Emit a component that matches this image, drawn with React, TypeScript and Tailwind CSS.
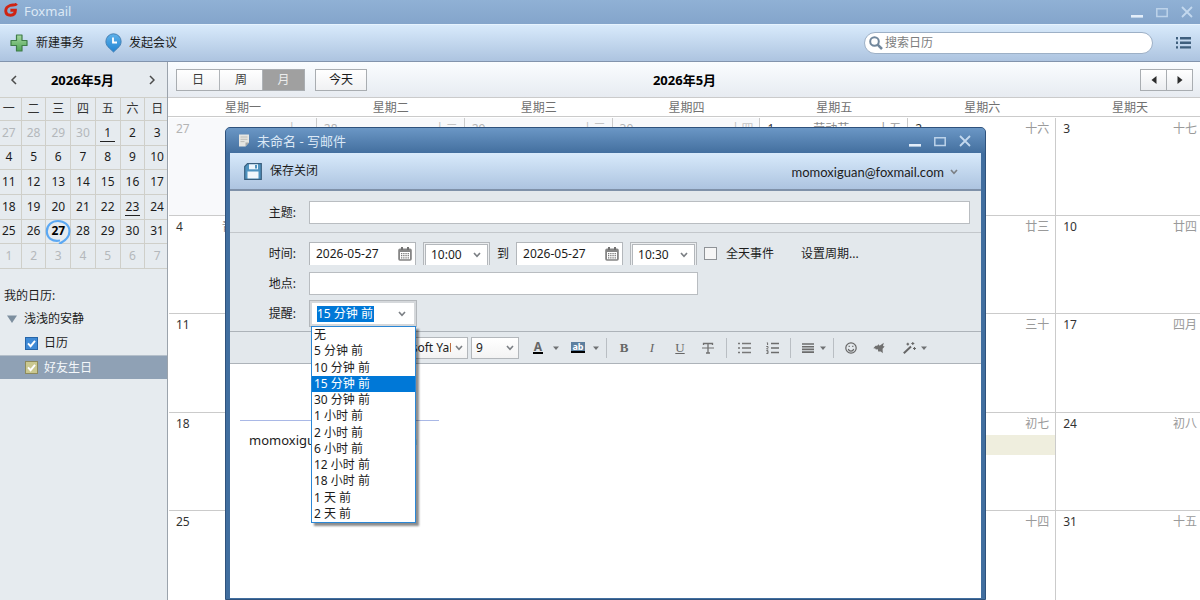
import type { ReactNode } from 'react';

interface Day {
    day: number;
    lunar: string;
    muted?: boolean;
    holiday?: string;
    event?: boolean;
}

const WEEK = ['一', '二', '三', '四', '五', '六', '日'];
const LONG_WEEK = ['星期一', '星期二', '星期三', '星期四', '星期五', '星期六', '星期天'];

const LUNAR = [
    '十一', '十二', '十三', '十四', '十五', '十六', '十七',
    '十八', '十九', '二十', '廿一', '廿二', '廿三', '廿四',
    '廿五', '廿六', '廿七', '廿八', '廿九', '三十', '四月',
    '初二', '初三', '初四', '初五', '初六', '初七', '初八',
    '初九', '初十', '十一', '十二', '十三', '十四', '十五',
];

const HOLIDAYS: Record<number, string> = { 1: '劳动节', 4: '青年节' };

// The grid opens on Monday 27 April, four days before the month does
const DAYS: Day[] = LUNAR.map((lunar, i) => {
    const day = i < 4 ? 27 + i : i - 3;
    return {
        day,
        lunar,
        muted: i < 4,
        holiday: i < 4 ? undefined : HOLIDAYS[day],
        event: i >= 4 && day === 23,
    };
});

const MINI_DAYS: Day[] = [...DAYS, ...[1, 2, 3, 4, 5, 6, 7].map((day) => ({ day, lunar: '', muted: true }))];

const REMINDERS = [
    '无', '5 分钟 前', '10 分钟 前', '15 分钟 前', '30 分钟 前', '1 小时 前',
    '2 小时 前', '6 小时 前', '12 小时 前', '18 小时 前', '1 天 前', '2 天 前',
];

function Chevron({ className }: { className?: string }) {
    return (
        <svg viewBox="0 0 8 6" className={`pointer-events-none h-1.5 w-2 shrink-0 ${className ?? ''}`} fill="none" stroke="#7b7f84" strokeWidth="1.6">
            <path d="M1 1l3 3.4L7 1" />
        </svg>
    );
}

function Caret() {
    return (
        <svg viewBox="0 0 8 8" className="h-2 w-2 shrink-0" fill="#6f7173">
            <path d="M1 2.4h6L4 6z" />
        </svg>
    );
}

function WindowButtons() {
    return (
        <div className="flex items-center gap-[13px]">
            <button aria-label="最小化" className="h-3 w-3">
                <svg viewBox="0 0 12 12" className="h-3 w-3"><path d="M0 9h12v2.6H0z" fill="#e3eefa" /></svg>
            </button>
            <button aria-label="最大化" className="h-3 w-3">
                <svg viewBox="0 0 12 12" className="h-3 w-3" fill="none" stroke="#bdd3ea" strokeWidth="1.5"><path d="M.8 2.8h10.4v7.6H.8z" /></svg>
            </button>
            <button aria-label="关闭" className="h-3 w-3">
                <svg viewBox="0 0 12 12" className="h-3 w-3" fill="none" stroke="#c3d8ee" strokeWidth="1.8"><path d="M1 1l10 10M11 1L1 11" /></svg>
            </button>
        </div>
    );
}

function TitleBar() {
    return (
        <header className="flex h-6 shrink-0 items-center justify-between bg-linear-to-b from-[#90b1d5] to-[#84a5cb] pr-[7px] pl-1">
            <div className="flex items-center gap-1.5">
                <svg viewBox="0 0 14 14" className="-mt-1 h-3.5 w-3.5" fill="none" stroke="#cf2413" strokeWidth="2.9">
                    <path d="M12.8.8C11 2.800 8.600 1.500 6 2.500C2.800 3.700 1.500 6 1.800 8.600C2.100 11.400 4 12.300 6.600 12.200C9.800 12.100 11.400 10.600 11.400 7.200H6.400" />
                </svg>
                <span className="-mt-0.5 text-[13px] leading-5 text-[#dce8f5]">Foxmail</span>
            </div>
            <WindowButtons />
        </header>
    );
}

function Toolbar() {
    return (
        <div className="flex h-[38px] shrink-0 items-center border-t border-b border-t-[#e6f3fe] border-b-[#8294ad] bg-linear-to-b from-[#d8eafb] to-[#adc4e0] pr-[9px] pl-2.5">
            <button className="flex items-center gap-2">
                <svg viewBox="0 0 18 18" className="h-[18px] w-[18px]">
                    <defs>
                        <linearGradient id="plus" x1="0" y1="0" x2="0" y2="1">
                            <stop offset="0" stopColor="#a5d8a0" />
                            <stop offset="1" stopColor="#4fa455" />
                        </linearGradient>
                    </defs>
                    <path d="M6.500 1h5.500v5.500h5v5h-5V17H6.500v-5.500H1v-5h5.500z" fill="url(#plus)" stroke="#3f7c48" strokeWidth="1.200" strokeLinejoin="round" />
                </svg>
                新建事务
            </button>
            <button className="ml-[21px] flex items-center gap-[7px]">
                <svg viewBox="0 0 17 20" className="h-5 w-[17px]">
                    <defs>
                        <linearGradient id="pin" x1="0" y1="0" x2="0" y2="1">
                            <stop offset="0" stopColor="#5fb2ea" />
                            <stop offset="1" stopColor="#1f83d2" />
                        </linearGradient>
                    </defs>
                    <path d="M8.500.8a7.600 7.600 0 0 1 7.600 7.600c0 3-1.500 5-3.300 6.500L8.500 19l-4.300-4.100C2.400 13.400.9 11.400.9 8.400A7.600 7.600 0 0 1 8.500.8z" fill="url(#pin)" stroke="#4680b3" />
                    <path d="M8 4.500v5h4" fill="none" stroke="#fff" strokeWidth="1.800" />
                </svg>
                发起会议
            </button>
            <label className="ml-auto flex h-[22px] w-[289px] items-center gap-0.5 rounded-full border border-[#9db0c6] bg-white pl-1">
                <svg viewBox="0 0 14 14" className="h-3.5 w-3.5" fill="none" stroke="#71879c" strokeWidth="2">
                    <circle cx="5.500" cy="5.500" r="4.300" />
                    <path d="M8.600 8.600l4.400 4.400" strokeWidth="2.600" />
                </svg>
                <input type="text" aria-label="搜索日历" placeholder="搜索日历" className="min-w-0 flex-1 bg-transparent outline-none placeholder:text-[#7d7d7d]" />
            </label>
            <button aria-label="菜单" className="ml-[23px]">
                <svg viewBox="0 0 15 12" className="h-3 w-[15px]" fill="#3f5f7d">
                    <path d="M0 0h2v2.400H0zM4 0h11v2.400H4zM0 4.600h2V7H0zM4 4.600h11V7H4zM0 9.200h2v2.400H0zM4 9.200h11v2.400H4z" />
                </svg>
            </button>
        </div>
    );
}

function CalendarCheck({ label, boxClass }: { label: string; boxClass: string }) {
    return (
        <label className="flex h-full items-center">
            <span className="relative flex">
                <input type="checkbox" defaultChecked className={`h-[13px] w-[13px] appearance-none border ${boxClass}`} />
                <svg viewBox="0 0 13 13" className="pointer-events-none absolute inset-0" fill="none" stroke="#fff" strokeWidth="1.900">
                    <path d="M3 6.300l2.600 2.900L10 3.900" />
                </svg>
            </span>
            <span className="ml-1.5">{label}</span>
        </label>
    );
}

function Sidebar() {
    return (
        <aside className="w-[168px] shrink-0 overflow-hidden border-r border-[#9ba3ac] bg-[#e6ebef]">
            <div className="flex h-[35px] items-center justify-between pr-3 pl-2.5">
                <button aria-label="上个月">
                    <svg viewBox="0 0 8 10" className="h-2.5 w-2" fill="none" stroke="#4b4b4b" strokeWidth="1.500"><path d="M6 1L2 5l4 4" /></svg>
                </button>
                <h2 className="text-[13px] font-bold text-black">2026年5月</h2>
                <button aria-label="下个月">
                    <svg viewBox="0 0 8 10" className="h-2.5 w-2" fill="none" stroke="#4b4b4b" strokeWidth="1.500"><path d="M3 1l4 4-4 4" /></svg>
                </button>
            </div>
            <div className="-mx-[3px]">
                <div className="grid h-6 grid-cols-7 border-y border-[#cfcfc9]">
                    {WEEK.map((name) => (
                        <span key={name} className="flex items-center justify-center border-r border-[#cfcfc9] text-[#333]">{name}</span>
                    ))}
                </div>
                <div className="grid h-[148px] grid-cols-7 grid-rows-6">
                    {MINI_DAYS.map(({ day, muted }, i) => {
                        const today = day === 27 && !muted;
                        const marked = !muted && (day === 1 || day === 23);
                        return (
                            <button
                                key={i}
                                className={`relative flex items-center justify-center border-r border-b border-[#cfcfc9] ${muted ? 'text-[#b4b8bb]' : 'text-[#1c1c1c]'} ${today ? 'font-bold text-black' : ''}`}
                            >
                                <span className={`w-[15px] border-y border-t-transparent text-center leading-4 ${marked ? 'border-b-[#222]' : 'border-b-transparent'}`}>{day}</span>
                                {today && (
                                    <svg viewBox="0 0 26 26" className="absolute h-[26px] w-[26px]" fill="none" stroke="#5ba8f3" strokeWidth="2.200">
                                        <path d="M15 22.500C7 24 1.800 19.500 1.800 13.200S7 3 13 3S24.500 7 24.500 13.200S19 23.500 14 26" />
                                    </svg>
                                )}
                            </button>
                        );
                    })}
                </div>
            </div>
            <div className="pt-3.5 leading-6 text-[#1c1c1c]">
                <h3 className="h-6 pt-px pl-1">我的日历:</h3>
                <div className="flex h-6 items-center gap-[7px] pl-[7px]">
                    <svg viewBox="0 0 10 8" className="h-2 w-2.5" fill="#7d8f9f"><path d="M0 .5h10L5 8z" /></svg>
                    <span>浅浅的安静</span>
                </div>
                <div className="h-6 pl-[25px]">
                    <CalendarCheck label="日历" boxClass="border-[#2665a8] bg-[#3f8ad6]" />
                </div>
                <div className="h-6 border-t border-[#b4bfca] bg-[#8fa1b5] pl-[25px] text-[#f4f7fa]">
                    <CalendarCheck label="好友生日" boxClass="border-[#8d8a5c] bg-[#cac890]" />
                </div>
            </div>
        </aside>
    );
}

function MonthView() {
    const tab = 'w-[43px] border-r border-[#b0b4b8]';
    return (
        <main className="flex min-w-0 flex-1 flex-col overflow-hidden bg-white">
            <div className="grid h-[35px] shrink-0 grid-cols-[1fr_auto_1fr] items-center bg-linear-to-b from-[#fafdff] to-[#e7ebf1] pr-[7px] pl-2">
                <div className="flex gap-2.5 text-[#3c3c3c]">
                    <div className="flex h-[22px] border border-[#a9adb1] bg-linear-to-b from-white to-[#f0f1f3]">
                        <button className={tab}>日</button>
                        <button className={tab}>周</button>
                        <button className="w-[41px] bg-[#a0a0a0] text-[#ececec]">月</button>
                    </div>
                    <button className="h-[22px] w-[52px] border border-[#a9adb1] bg-linear-to-b from-white to-[#f0f1f3] text-[#1c1c1c]">今天</button>
                </div>
                <h1 className="text-[13px] font-bold text-black">2026年5月</h1>
                <div className="flex h-[22px] justify-self-end border border-[#a9adb1] bg-linear-to-b from-white to-[#ebedf0]">
                    <button aria-label="上一页" className="flex w-[26px] items-center justify-center border-r border-[#a9adb1]">
                        <svg viewBox="0 0 6 8" className="h-2 w-1.5" fill="#2c2c2c"><path d="M5.500 0v8L.5 4z" /></svg>
                    </button>
                    <button aria-label="下一页" className="flex w-[25px] items-center justify-center">
                        <svg viewBox="0 0 6 8" className="h-2 w-1.5" fill="#2c2c2c"><path d="M.5 0v8l5-4z" /></svg>
                    </button>
                </div>
            </div>
            {/* The last column and row run a little past the window edge */}
            <div className="-mr-1 grid h-5 shrink-0 grid-cols-7 items-center border-y border-[#cbcbcb] pt-px pl-px text-center text-[#707070]">
                {LONG_WEEK.map((name) => (
                    <span key={name}>{name}</span>
                ))}
            </div>
            <div className="-mr-1 -mb-[9px] grid min-h-0 flex-1 grid-cols-7 grid-rows-5 pt-px pl-px">
                {DAYS.map(({ day, lunar, muted, holiday, event }, i) => (
                    <div key={i} className={`min-h-0 border-r border-b border-[#cbcbcb] ${muted ? 'bg-[#f8f9fb] text-[#b4b4b4]' : 'text-[#333]'}`}>
                        <div className="flex h-[22px] items-center pr-1.5 pl-[7px]">
                            <span>{day}</span>
                            <span className="mr-7 ml-auto text-[#8c8c8c]">{holiday}</span>
                            <span className={muted ? 'text-[#c4c4c4]' : 'text-[#9a9a9a]'}>{lunar}</span>
                        </div>
                        {event && <div className="h-5 bg-[#efeede]" />}
                    </div>
                ))}
            </div>
        </main>
    );
}

function DateField({ id, label }: { id: string; label: string }) {
    return (
        <div className="flex h-[23px] w-[107px] items-center justify-between border border-b-0 border-[#b3b7bb] bg-white pr-[3px] pl-1.5">
            <input id={id} type="text" aria-label={label} defaultValue="2026-05-27" className="w-[70px] outline-none" />
            <svg viewBox="0 0 14 14" className="h-3.5 w-3.5 shrink-0">
                <path d="M2 1.500h10a1.800 1.800 0 0 1 1.800 1.800V12a1.800 1.800 0 0 1-1.800 1.800H2A1.800 1.800 0 0 1 .2 12V3.300A1.800 1.800 0 0 1 2 1.500z" fill="#858585" />
                <path d="M3 0h2v3H3zM9 0h2v3H9z" fill="#707070" />
                <path d="M2 5h10v7.200H2z" fill="#fff" />
                <path d="M3 6.600h8M3 8.700h8M3 10.800h8" stroke="#777" strokeWidth="1.200" strokeDasharray="1.300 .9" />
            </svg>
        </div>
    );
}

function TimeField({ label, value }: { label: string; value: string }) {
    return (
        <div className="h-[23px] w-[67px] border border-b-0 border-[#b3b7bb] bg-[#eceef0] px-px pt-px">
            <div className="flex h-full items-center border border-b-0 border-[#b3b7bb] bg-white pr-1.5">
                <select aria-label={label} className="min-w-0 flex-1 appearance-none pl-[5px] outline-none">
                    <option>{value}</option>
                </select>
                <Chevron />
            </div>
        </div>
    );
}

function ReminderField() {
    return (
        <div className="relative h-[27px] w-[108px] border border-[#b3b7bb] bg-[#d5d8db] p-0.5">
            <div className="flex h-full items-center justify-between bg-white pr-2 pl-[5px]">
                <select id="reminder" defaultValue="15 分钟 前" className="h-4 w-[57px] appearance-none bg-[#0078d7] leading-4 text-white outline-none">
                    {REMINDERS.map((item) => (
                        <option key={item}>{item}</option>
                    ))}
                </select>
                <Chevron />
            </div>
            <ul role="listbox" aria-label="提醒" className="absolute top-[25px] left-px z-10 grid h-[197px] w-[105px] grid-rows-12 border border-[#2a87d6] bg-white shadow-[3px_3px_2px_rgba(0,0,0,0.45)]">
                {REMINDERS.map((item) => {
                    const selected = item === '15 分钟 前';
                    return (
                        <li key={item} role="option" aria-selected={selected} className={`pl-0.5 leading-4 ${selected ? 'bg-[#0078d7] text-white' : 'text-[#1c1c1c]'}`}>
                            {item}
                        </li>
                    );
                })}
            </ul>
        </div>
    );
}

function EditorButton({ label, children }: { label: string; children: ReactNode }) {
    return (
        <button aria-label={label} className="flex w-7 items-center justify-center font-['Liberation_Serif',serif] text-[13px] text-[#666]">
            {children}
        </button>
    );
}

function Divider() {
    return <span className="mr-[3px] ml-1 h-5 w-px bg-[#b9bec3]" />;
}

function EditorBar() {
    return (
        <div className="flex h-[33px] shrink-0 items-center border-y border-[#adb3b9] pl-[133px]">
            <div className="flex h-[22px] w-[105px] items-center border border-[#b3b7bb] bg-linear-to-b from-white to-[#f3f3f3] pr-1">
                <select aria-label="字体" className="min-w-0 flex-1 appearance-none pl-4 outline-none">
                    <option>Microsoft YaHei</option>
                </select>
                <Chevron className="ml-1" />
            </div>
            <div className="ml-[3px] flex h-[22px] w-12 items-center border border-[#b3b7bb] bg-linear-to-b from-white to-[#f3f3f3] pr-1">
                <select aria-label="字号" className="min-w-0 flex-1 appearance-none pl-1 outline-none">
                    <option>9</option>
                </select>
                <Chevron />
            </div>
            <button aria-label="文字颜色" className="ml-[7px] flex w-10 items-center gap-1.5 pl-1">
                <span className="flex w-4 justify-center">
                    <span className="w-2.5 border-b-2 border-black text-center text-[12px] leading-[11px] font-bold text-[#666]">A</span>
                </span>
                <Caret />
            </button>
            <button aria-label="背景颜色" className="flex w-9 items-center gap-1.5 pl-1">
                <span className="w-4 shrink-0 px-px">
                    <span className="block border-b-2 border-black bg-[#5c7f9f] text-center text-[9px] leading-[9px] font-bold text-white">ab</span>
                </span>
                <Caret />
            </button>
            <Divider />
            <EditorButton label="粗体"><b>B</b></EditorButton>
            <EditorButton label="斜体"><i>I</i></EditorButton>
            <EditorButton label="下划线"><u>U</u></EditorButton>
            <EditorButton label="删除线">
                <svg viewBox="0 0 12 12" className="h-3 w-3" fill="none" stroke="#707070">
                    <path d="M1.500 3V1.500h9V3M6 1.500V11M4 11h4" strokeWidth="1.300" />
                    <path d="M0 6h12" />
                </svg>
            </EditorButton>
            <Divider />
            <EditorButton label="项目符号">
                <svg viewBox="0 0 13 12" className="h-3 w-[13px]" fill="none" stroke="#777" strokeWidth="1.300">
                    <path d="M0 1.500h2M0 6h2M0 10.500h2M4 1.500h9M4 6h9M4 10.500h9" />
                </svg>
            </EditorButton>
            <EditorButton label="编号">
                <svg viewBox="0 0 13 12" className="h-3 w-[13px]" fill="none" stroke="#6c6c6c" strokeWidth="1.300">
                    <path d="M5 1.500h8M5 6h8M5 10.500h8" />
                    <path d="M.8.8h.8V3M.3 4.500h1.700v1L.6 7h1.700M.3 8.600h1.700v3H.3M.8 10h1" strokeWidth="1" />
                </svg>
            </EditorButton>
            <Divider />
            <button aria-label="对齐" className="flex items-center gap-[5px] pr-0.5 pl-2">
                <svg viewBox="0 0 12 10" className="h-2.5 w-3" stroke="#6c6c6c" strokeWidth="1.600">
                    <path d="M0 1h12M0 3.700h12M0 6.400h12M0 9.100h12" />
                </svg>
                <Caret />
            </button>
            <Divider />
            <EditorButton label="表情">
                <svg viewBox="0 0 12 12" className="h-3 w-3" fill="none" stroke="#666" strokeWidth="1.200">
                    <circle cx="6" cy="6" r="5.200" />
                    <path d="M3.300 7a2.800 2.800 0 0 0 5.400 0M4.200 3.800v1.200M7.800 3.800v1.200" />
                </svg>
            </EditorButton>
            <EditorButton label="信纸">
                <svg viewBox="0 0 12 12" className="h-3 w-3" fill="#6f6f6f">
                    <path d="M.3 6.200L2.600 3.800l1.600 0L5.600 2.200l1 1.600L10.800.8l-.8 3.200 1.600.4-2 2.400.2 4.400-2-1.600L5.200 9.400l-.4-2.200-2 .4-.4-1.200z" />
                </svg>
            </EditorButton>
            <button aria-label="特效" className="ml-2.5 flex items-center gap-1">
                <svg viewBox="0 0 13 12" className="h-3 w-[13px]" fill="none" stroke="#666">
                    <path d="M.8 11.200L8 4.600" strokeWidth="2" />
                    <path d="M9.800 0v3M8.300 1.500h3M11.500 5v3M10 6.500h3M4.800.8v2.600M3.500 2.100h2.600" strokeWidth="1.100" />
                </svg>
                <Caret />
            </button>
        </div>
    );
}

function Compose() {
    const label = 'w-[67px] shrink-0 pr-px text-right';
    return (
        <section
            aria-label="写邮件"
            className="absolute top-[127px] right-[214px] bottom-0 left-[225px] flex flex-col rounded-t-[5px] border border-[#2f527c] bg-[#416e9f] px-1 pb-px text-[#1c1c1c]"
        >
            <div className="-mx-1 flex h-[25px] shrink-0 items-center justify-between rounded-t-[4px] bg-linear-to-b from-[#6b97c5] to-[#436f9f] pr-3.5 pl-3">
                <div className="flex items-center gap-[7px]">
                    <svg viewBox="0 0 12 13" className="h-[13px] w-3">
                        <path d="M1 .5h10v8L7.500 12.500H1z" fill="#e6e6e2" />
                        <path d="M11 8.500H7.500v4z" fill="#a9aba9" />
                        <path d="M2.500 3h7M2.500 5.300h7M2.500 7.600h4" stroke="#bdbdb8" />
                    </svg>
                    <span className="text-[13px] leading-5 text-[#dbe8f6]">未命名 - 写邮件</span>
                </div>
                <WindowButtons />
            </div>
            <div className="flex h-[38px] shrink-0 items-center justify-between border-b-2 border-b-[#7f91a9] bg-linear-to-b from-[#d8eafb] to-[#adc4e0] pr-[23px] pl-3.5">
                <button className="flex items-center gap-2">
                    <svg viewBox="0 0 18 17" className="h-[17px] w-[18px]">
                        <path d="M3.500.7h13.800v15.600H.7V3.500z" fill="#4f93bf" stroke="#3a5f7e" strokeWidth="1.200" />
                        <path d="M5 1.300h9v5H5z" fill="#eef6fc" />
                        <path d="M11 2h2v3.500h-2z" fill="#4f93bf" />
                        <path d="M3.500 8.500h11v7h-11z" fill="#f3f8fc" />
                    </svg>
                    保存关闭
                </button>
                <button className="flex items-center gap-1.5 pt-0.5">
                    <span className="font-['Lato','Noto_Sans',sans-serif] text-[13px]">momoxiguan@foxmail.com</span>
                    <Chevron />
                </button>
            </div>
            <form className="flex min-h-0 flex-1 flex-col bg-[#e3e8ec]" onSubmit={(e) => e.preventDefault()}>
                <div className="flex h-[42px] shrink-0 items-center gap-3 border-b border-[#c3c7cb] pt-0.5 pr-[11px]">
                    <label htmlFor="subject" className={label}>主题:</label>
                    <input id="subject" type="text" className="h-[23px] min-w-0 flex-1 border border-[#b9bdc1] bg-white px-1 outline-none" />
                </div>
                <div className="flex shrink-0 flex-col pt-[9px] pb-1">
                    <div className="flex items-center">
                        <label htmlFor="start-date" className={label}>时间:</label>
                        <div className="ml-3 flex items-center gap-[7px]">
                            <DateField id="start-date" label="开始日期" />
                            <TimeField label="开始时间" value="10:00" />
                            <span>到</span>
                            <DateField id="end-date" label="结束日期" />
                            <TimeField label="结束时间" value="10:30" />
                            <label className="flex items-center gap-[9px]">
                                <input type="checkbox" className="h-[13px] w-[13px] appearance-none border border-[#8f9397] bg-[#f6f6f6]" />
                                全天事件
                            </label>
                        </div>
                        <button className="ml-[27px]">设置周期...</button>
                    </div>
                    <div className="mt-[7px] flex items-center gap-3">
                        <label htmlFor="place" className={label}>地点:</label>
                        <input id="place" type="text" className="h-[23px] w-[389px] border border-[#b9bdc1] bg-white px-1 outline-none" />
                    </div>
                    <div className="mt-[5px] flex items-center gap-3">
                        <label htmlFor="reminder" className={label}>提醒:</label>
                        <ReminderField />
                    </div>
                </div>
                <EditorBar />
                <div className="min-h-0 flex-1 bg-white px-2.5 pt-14 text-[13px]">
                    <hr className="w-[199px] border-[#a9b8e6]" />
                    <p className="mt-2.5 pl-[9px] leading-[18px]">momoxiguan@foxmail.com</p>
                </div>
            </form>
        </section>
    );
}

export default function App() {
    return (
        <div className="relative flex h-screen flex-col overflow-hidden font-['Noto_Sans','Noto_Sans_CJK_SC',sans-serif] text-[12px] leading-4 text-[#1c1c1c]">
            <TitleBar />
            <Toolbar />
            <div className="flex min-h-0 flex-1">
                <Sidebar />
                <MonthView />
            </div>
            <Compose />
        </div>
    );
}
